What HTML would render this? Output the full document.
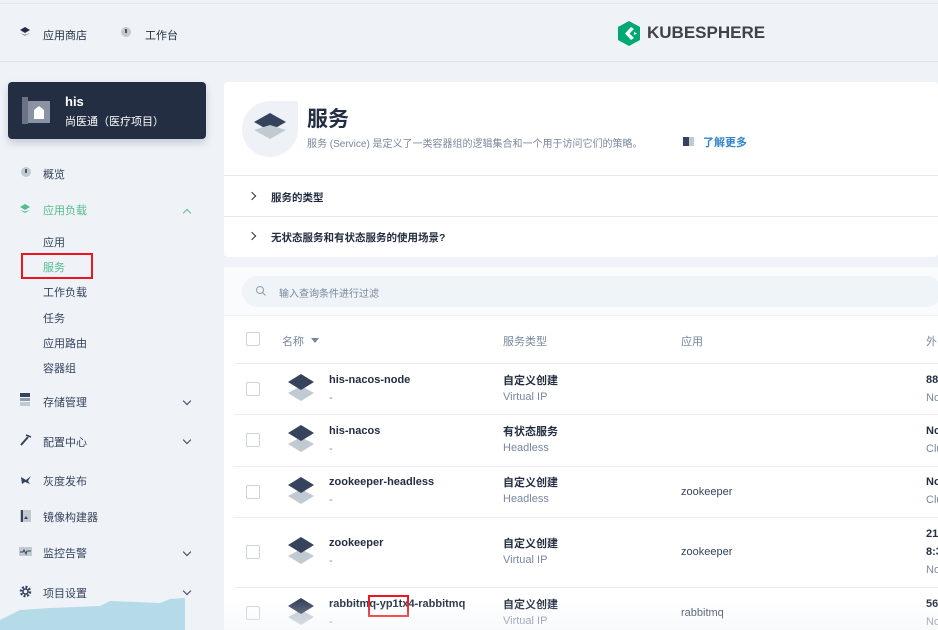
<!DOCTYPE html>
<html><head><meta charset="utf-8"><style>
*{margin:0;padding:0;box-sizing:border-box}
body{width:938px;height:630px;overflow:hidden;background:#eff3f8;font-family:"Liberation Sans","Noto Sans CJK SC",sans-serif;color:#242e42;position:relative;font-size:12px}
.a{position:absolute;white-space:nowrap}
.top{position:absolute;left:0;top:3px;width:938px;height:59px;border-bottom:1px solid #dde3ec;border-top:1px solid #e3e8ef}
.nav{font-size:11px;color:#242e42}
.side{font-size:11px;color:#36435c}
.chev{position:absolute;width:6px;height:6px;border-right:1.5px solid #36435c;border-bottom:1.5px solid #36435c;transform:rotate(45deg)}
.panel{position:absolute;background:#fff;border-radius:4px}
.row{position:absolute;left:234px;width:704px;border-top:1px solid #e9edf3}
.cb{position:absolute;width:14px;height:14px;border:1px solid #ccd3db;border-radius:2px;background:#fff}
.b{font-weight:bold;font-size:11px;color:#242e42}
.g{font-size:11px;color:#79879c}
</style></head><body>
<div class="top"></div>
<svg class="a" style="left:19px;top:26px" width="12" height="12" viewBox="0 0 12 12"><path d="M6 1L11 4L6 7L1 4Z" fill="#242e42"/><path d="M1 7L6 10L11 7L6 8.5Z" fill="#8f9bb0"/></svg>
<div class="a nav" style="left:43px;top:27px">应用商店</div>
<svg class="a" style="left:120px;top:26px" width="12" height="12"><circle cx="6" cy="6" r="5" fill="#c1c9d1"/><path d="M6 3V7" stroke="#242e42" stroke-width="1.5"/></svg>
<div class="a nav" style="left:145px;top:27px">工作台</div>
<svg class="a" style="left:617px;top:21px" width="24" height="25" viewBox="0 0 24 25"><path d="M12 0L23 6V19L12 25L1 19V6Z" fill="#00a971"/><path d="M14 6L8 12.5L14 19L17 17L12.5 12.5L17 8Z" fill="#fff"/><path d="M17 11L20 12.5L17 14Z" fill="#fff"/></svg>
<div class="a" style="left:647px;top:23px;font-size:17px;font-weight:bold;color:#3e4349;letter-spacing:0">KUBESPHERE</div>

<div class="a" style="left:8px;top:82px;width:198px;height:57px;background:#242e42;border-radius:4px;box-shadow:0 4px 8px rgba(36,46,66,.2)"></div>
<svg class="a" style="left:22px;top:97px" width="28" height="27"><rect x="0" y="0" width="6" height="27" fill="#6b7385"/><rect x="6" y="4" width="22" height="22" fill="#8b93a3"/><path d="M12 22V13L17 9L22 13V22Z" fill="#fff"/></svg>
<div class="a" style="left:65px;top:94px;color:#fff;font-weight:bold;font-size:13px">his</div>
<div class="a" style="left:65px;top:113px;color:#fff;font-size:11px">尚医通（医疗项目）</div>

<svg class="a" style="left:20px;top:166px" width="12" height="12"><circle cx="6" cy="6" r="5" fill="#c1c9d1"/><path d="M6 3V7" stroke="#242e42" stroke-width="1.5"/></svg>
<div class="a side" style="left:43px;top:166px">概览</div>
<svg class="a" style="left:19px;top:203px" width="12" height="12" viewBox="0 0 12 12"><path d="M6 1L11 4L6 7L1 4Z" fill="#55bc8a"/><path d="M1 7L6 10L11 7L6 8.5Z" fill="#55bc8a"/></svg>
<div class="a side" style="left:43px;top:202px;color:#55bc8a">应用负载</div>
<div class="chev" style="left:184px;top:210px;transform:rotate(225deg);border-color:#55bc8a"></div>
<div class="a side" style="left:43px;top:234px">应用</div>
<div class="a side" style="left:43px;top:259px;color:#55bc8a">服务</div>
<div class="a" style="left:21px;top:253px;width:72px;height:26px;border:2px solid #f0141e"></div>
<div class="a side" style="left:43px;top:284px">工作负载</div>
<div class="a side" style="left:43px;top:310px">任务</div>
<div class="a side" style="left:43px;top:335px">应用路由</div>
<div class="a side" style="left:43px;top:360px">容器组</div>
<svg class="a" style="left:20px;top:393px" width="10" height="13"><rect width="10" height="4" fill="#36435c"/><rect y="5" width="10" height="3" fill="#8f9bb0"/><rect y="9" width="10" height="4" fill="#c1c9d1"/></svg>
<div class="a side" style="left:43px;top:394px">存储管理</div><div class="chev" style="left:184px;top:398px"></div>
<svg class="a" style="left:20px;top:434px" width="12" height="12"><path d="M1 11L8 3" stroke="#36435c" stroke-width="2"/><path d="M6 1L11 3" stroke="#36435c" stroke-width="1.5"/></svg>
<div class="a side" style="left:43px;top:434px">配置中心</div><div class="chev" style="left:184px;top:437px"></div>
<svg class="a" style="left:20px;top:475px" width="12" height="10"><path d="M1 2L6 5L11 1L8 6L10 9L5 7L2 9Z" fill="#36435c"/></svg>
<div class="a side" style="left:43px;top:473px">灰度发布</div>
<svg class="a" style="left:20px;top:510px" width="11" height="12"><rect width="11" height="12" fill="#c1c9d1"/><rect x="1" width="2" height="12" fill="#36435c"/><path d="M4 9L6 6L8 9Z" fill="#36435c"/></svg>
<div class="a side" style="left:43px;top:509px">镜像构建器</div>
<svg class="a" style="left:19px;top:547px" width="13" height="9"><rect width="13" height="9" fill="#c1c9d1"/><path d="M1 5H4L5 3L7 7L8 4H12" stroke="#36435c" fill="none"/></svg>
<div class="a side" style="left:43px;top:545px">监控告警</div><div class="chev" style="left:184px;top:549px"></div>
<svg class="a" style="left:19px;top:585px" width="13" height="13" viewBox="0 0 13 13"><circle cx="6.5" cy="6.5" r="4.5" fill="none" stroke="#36435c" stroke-width="2.5" stroke-dasharray="2 1.5"/><circle cx="6.5" cy="6.5" r="2.5" fill="none" stroke="#36435c" stroke-width="1.5"/></svg>
<div class="a side" style="left:43px;top:585px">项目设置</div><div class="chev" style="left:184px;top:588px"></div>
<svg class="a" style="left:0;top:598px" width="186" height="32"><path d="M0 32V22L20 12L50 10L100 8L110 3L160 5L170 1L185 0V32Z" fill="#b5dbe8"/></svg>

<div class="panel" style="left:224px;top:82px;width:714px;height:175px"></div>
<svg class="a" style="left:242px;top:101px" width="56" height="56"><path d="M28 0H56V28A28 28 0 1 1 28 0Z" fill="#eef2f6"/><path d="M28 12L44 21L28 30L12 21Z" fill="#36435c"/><path d="M12 29L28 38L44 29L28 24Z" fill="#c1c9d1"/></svg>
<div class="a" style="left:307px;top:103px;font-size:21px;font-weight:bold;color:#242e42">服务</div>
<div class="a" style="left:307px;top:135px;font-size:10px;color:#79879c">服务 (Service) 是定义了一类容器组的逻辑集合和一个用于访问它们的策略。</div>
<div class="a" style="left:683px;top:137px;width:6px;height:9px;background:#36435c"></div><div class="a" style="left:689px;top:137px;width:5px;height:9px;background:#c1c9d1"></div>
<div class="a" style="left:703px;top:134px;font-size:11px;color:#3385cc;font-weight:bold">了解更多</div>
<div class="a" style="left:224px;top:175px;width:714px;border-top:1px solid #e3e8ef"></div>
<div class="a" style="left:224px;top:216px;width:714px;border-top:1px solid #e3e8ef"></div>
<div class="chev" style="left:249px;top:193px;transform:rotate(-45deg);border-color:#242e42"></div>
<div class="a b" style="left:271px;top:190px;font-size:10.5px">服务的类型</div>
<div class="chev" style="left:249px;top:233px;transform:rotate(-45deg);border-color:#242e42"></div>
<div class="a b" style="left:271px;top:230px;font-size:10.5px">无状态服务和有状态服务的使用场景?</div>

<div class="panel" style="left:224px;top:267px;width:714px;height:363px;border-radius:4px 0 0 0"></div>
<div class="a" style="left:224px;top:267px;width:714px;height:49px;background:#fafbfc;border-bottom:1px solid #eef1f4"></div>
<div class="a" style="left:242px;top:276px;width:700px;height:31px;background:#eff4f9;border-radius:16px"></div>
<svg class="a" style="left:255px;top:285px" width="12" height="12"><circle cx="5" cy="5" r="3.5" fill="none" stroke="#8f9bb0" stroke-width="1"/><path d="M7.5 7.5L10.5 10.5" stroke="#8f9bb0"/></svg>
<div class="a g" style="left:279px;top:285px;font-size:10px">输入查询条件进行过滤</div>
<div class="cb" style="left:246px;top:332px"></div>
<div class="a g" style="left:282px;top:333px">名称</div>
<div class="a" style="left:311px;top:338px;border:4px solid transparent;border-top:5px solid #79879c"></div>
<div class="a g" style="left:503px;top:333px">服务类型</div>
<div class="a g" style="left:681px;top:333px">应用</div>
<div class="a g" style="left:926px;top:333px">外</div>

<div class="row" style="top:363px"></div><div class="row" style="top:414px"></div><div class="row" style="top:466px"></div><div class="row" style="top:517px"></div><div class="row" style="top:587px"></div>

<div class="cb" style="left:246px;top:382px"></div>
<svg class="a" style="left:286px;top:374px" width="30" height="30"><path d="M2 19L15 27L28 19L15 12Z" fill="#c1c9d1"/><path d="M15 0L28 8L15 16L2 8Z" fill="#36435c"/></svg>
<div class="a b" style="left:329px;top:374px">his-nacos-node</div><div class="a g" style="left:329px;top:392px">-</div>
<div class="a b" style="left:503px;top:372px">自定义创建</div><div class="a g" style="left:503px;top:391px">Virtual IP</div>
<div class="a b" style="left:926px;top:374px">88</div><div class="a g" style="left:926px;top:392px">No</div>

<div class="cb" style="left:246px;top:433px"></div>
<svg class="a" style="left:286px;top:425px" width="30" height="30"><path d="M2 19L15 27L28 19L15 12Z" fill="#c1c9d1"/><path d="M15 0L28 8L15 16L2 8Z" fill="#36435c"/></svg>
<div class="a b" style="left:329px;top:425px">his-nacos</div><div class="a g" style="left:329px;top:443px">-</div>
<div class="a b" style="left:503px;top:423px">有状态服务</div><div class="a g" style="left:503px;top:442px">Headless</div>
<div class="a b" style="left:926px;top:425px">No</div><div class="a g" style="left:926px;top:443px">Clu</div>

<div class="cb" style="left:246px;top:485px"></div>
<svg class="a" style="left:286px;top:477px" width="30" height="30"><path d="M2 19L15 27L28 19L15 12Z" fill="#c1c9d1"/><path d="M15 0L28 8L15 16L2 8Z" fill="#36435c"/></svg>
<div class="a b" style="left:329px;top:476px">zookeeper-headless</div><div class="a g" style="left:329px;top:494px">-</div>
<div class="a b" style="left:503px;top:474px">自定义创建</div><div class="a g" style="left:503px;top:493px">Headless</div>
<div class="a g" style="left:681px;top:486px;color:#36435c">zookeeper</div>
<div class="a b" style="left:926px;top:476px">No</div><div class="a g" style="left:926px;top:494px">Clu</div>

<div class="cb" style="left:246px;top:545px"></div>
<svg class="a" style="left:286px;top:537px" width="30" height="30"><path d="M2 19L15 27L28 19L15 12Z" fill="#c1c9d1"/><path d="M15 0L28 8L15 16L2 8Z" fill="#36435c"/></svg>
<div class="a b" style="left:329px;top:537px">zookeeper</div><div class="a g" style="left:329px;top:555px">-</div>
<div class="a b" style="left:503px;top:535px">自定义创建</div><div class="a g" style="left:503px;top:554px">Virtual IP</div>
<div class="a g" style="left:681px;top:546px;color:#36435c">zookeeper</div>
<div class="a b" style="left:926px;top:528px">21</div><div class="a b" style="left:926px;top:546px">8:3</div><div class="a g" style="left:926px;top:564px">No</div>

<div class="cb" style="left:246px;top:606px"></div>
<svg class="a" style="left:286px;top:598px" width="30" height="30"><path d="M2 19L15 27L28 19L15 12Z" fill="#c1c9d1"/><path d="M15 0L28 8L15 16L2 8Z" fill="#36435c"/></svg>
<div class="a b" style="left:329px;top:598px">rabbitmq-yp1tx4-rabbitmq</div><div class="a g" style="left:329px;top:616px">-</div>
<div class="a" style="left:368px;top:595px;width:41px;height:22px;border:2px solid #f0141e"></div>
<div class="a b" style="left:503px;top:596px">自定义创建</div><div class="a g" style="left:503px;top:615px">Virtual IP</div>
<div class="a g" style="left:681px;top:607px;color:#36435c">rabbitmq</div>
<div class="a b" style="left:926px;top:598px">56</div><div class="a g" style="left:926px;top:616px">No</div>
<div class="a" style="left:224px;top:600px;width:714px;height:30px;background:linear-gradient(rgba(255,255,255,0),rgba(240,243,247,.5))"></div>
</body></html>
